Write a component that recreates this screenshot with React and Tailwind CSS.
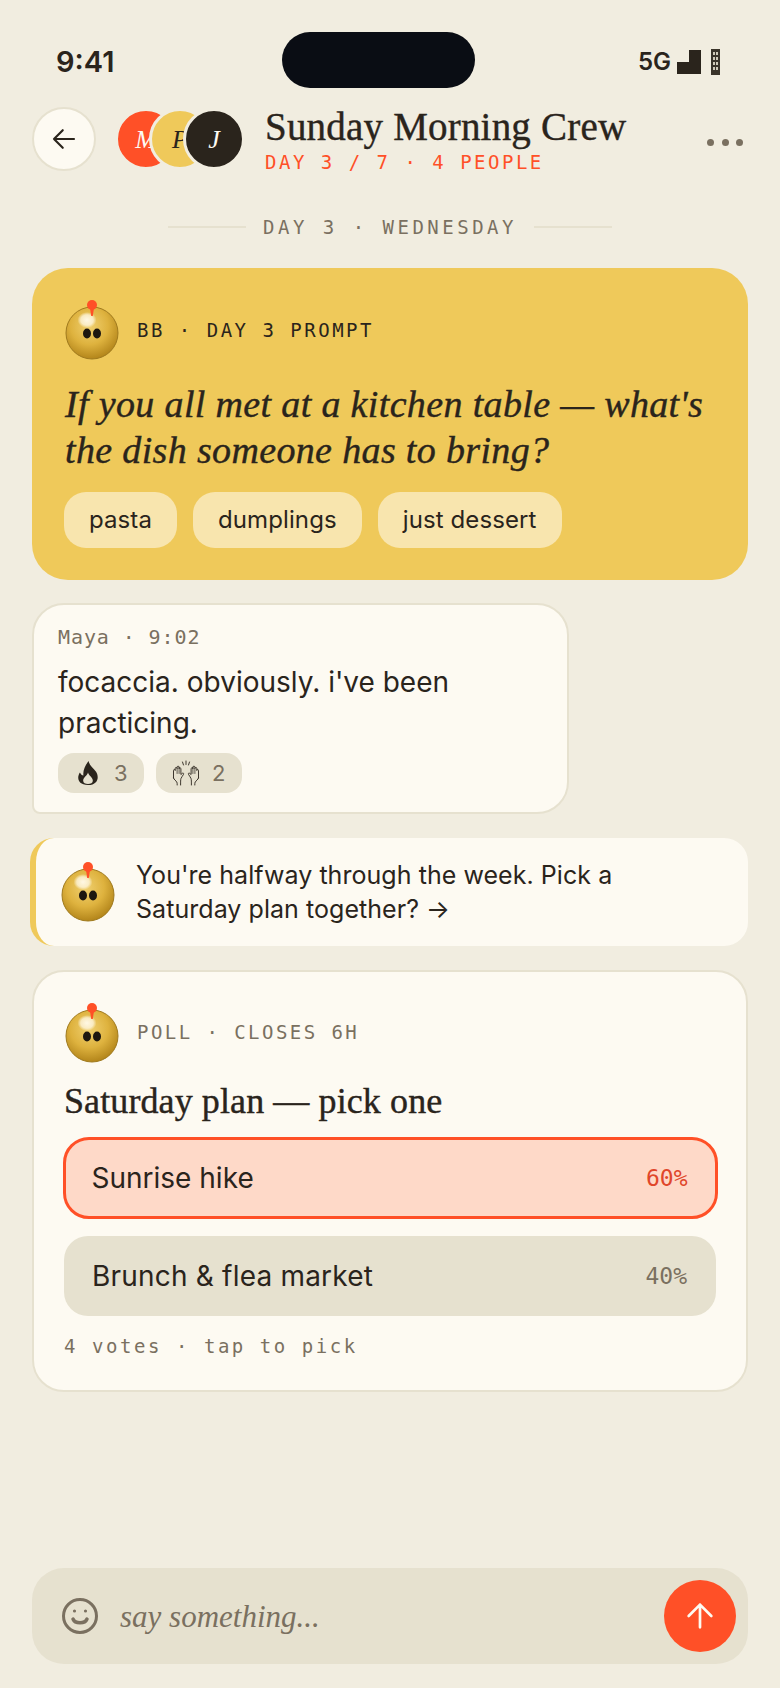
import React from "react";

const serif = "font-['Liberation_Serif',serif]";
const heavy = "[-webkit-text-stroke:0.4px_currentColor]";
const mono = "font-['DejaVu_Sans_Mono',monospace]";

function Bob({ id }) {
  return (
    <svg width="54" height="60" viewBox="0 0 54 60" className="shrink-0">
      <defs>
        <radialGradient id={`g${id}`} cx="0.45" cy="0.36" r="0.66">
          <stop offset="0" stopColor="#f0d070" />
          <stop offset="0.55" stopColor="#deb23e" />
          <stop offset="1" stopColor="#b08218" />
        </radialGradient>
        <radialGradient id={`h${id}`} cx="0.5" cy="0.5" r="0.5">
          <stop offset="0" stopColor="#fff8e4" stopOpacity="1" />
          <stop offset="0.65" stopColor="#fff8e4" stopOpacity="0.75" />
          <stop offset="1" stopColor="#fff8e4" stopOpacity="0" />
        </radialGradient>
      </defs>
      <circle cx="27" cy="33" r="26" fill={`url(#g${id})`} stroke="#a07a1e" strokeWidth="1" />
      <ellipse cx="22" cy="20" rx="9.500" ry="8" fill={`url(#h${id})`} />
      <path d="M25 8h4l-1.200 8h-1.600z" fill="#ff5027" />
      <circle cx="27" cy="5" r="5" fill="#ff5027" />
      <ellipse cx="22" cy="33.500" rx="4" ry="5" fill="#1d1710" />
      <ellipse cx="32" cy="33.500" rx="4" ry="5" fill="#1d1710" />
    </svg>
  );
}

function Avatar({ letter, bg, fg, cls }) {
  return (
    <div className={`w-[62px] h-[62px] rounded-full flex items-center justify-center border-[3px] ${serif} italic text-[26px] ${bg} ${fg} ${cls}`}>
      {letter}
    </div>
  );
}

function Chip({ children }) {
  return (
    <div className="h-[56px] px-[25px] rounded-[22px] bg-[#f8e5ae] flex items-center text-[24px] tracking-[0.1px] text-[#2a241c]">
      {children}
    </div>
  );
}

function Flame() {
  return (
    <svg width="28" height="28" viewBox="0 0 28 28">
      <g transform="translate(14 14) scale(1.150) translate(-14 -13.500)">
        <path d="M14.500 3c.6 4 4 6 6.500 9.500 2.600 3.800 2.400 11.500-7 11.500-9.500 0-9.700-7.500-7-11 .8 1.700 1.800 2.500 3 2.700-.6-4.500 1.700-9 4.500-12.700z" fill="#2a241c" />
        <path d="M14 13c.8 3 4.200 4 4.200 7.200 0 2-1.900 2.800-4.200 2.800s-4.200-.8-4.200-2.800C9.800 17 13.200 16 14 13z" fill="#e6e1cf" />
      </g>
    </svg>
  );
}

function Hands() {
  const hand = (
    <g fill="none" stroke="#2a241c" strokeWidth="0.9" strokeLinecap="round" strokeLinejoin="round">
      <path d="M1.500 19v-7.500c0-1.300 1.600-1.300 1.700 0V9.500c0-1.400 1.800-1.400 1.900 0V8.200c0-1.400 1.900-1.400 2 0v1.500c0-1.200 1.800-1.200 1.800.1v5.700c.6-.2 1.200-1.200 1.800-1.400.8-.2 1.200.6.800 1.300-.8 1.500-2 2.700-2.600 4.300-.3 1-.3 3-.3 6.300" />
      <path d="M1.500 19c.3 1.500 2.700 3 3.300 4 .4.800.4 2 .4 3" />
      <path d="M5.100 9.500v5M7.100 8.200v6.300" strokeWidth="0.7" />
    </g>
  );
  return (
    <svg width="28" height="28" viewBox="0 0 28 28">
      {hand}
      <g transform="translate(28 0) scale(-1 1)">{hand}</g>
      <path d="M14 2v3.500M10.500 3l1 3M17.500 3l-1 3" fill="none" stroke="#2a241c" strokeWidth="0.9" strokeLinecap="round" />
    </svg>
  );
}

function Reaction({ icon, n }) {
  return (
    <div className="w-[86px] h-[40px] rounded-[16px] bg-[#e6e1cf] flex items-center pl-[16px] gap-[12px] text-[22px]">
      {icon}
      <span className="text-[#7a7060]">{n}</span>
    </div>
  );
}

export default function App() {
  return (
    <div className="w-[780px] h-[1688px] bg-[#f1ede0] text-[#2a241c] font-['Inter',sans-serif] flex flex-col overflow-hidden">
      {/* status */}
      <div className="h-[107px] shrink-0 flex items-start pl-[56px] pr-[60px]">
        <div className="w-[226px] mt-[44px] text-[29px] font-semibold leading-[36px]">9:41</div>
        <div className="mt-[32px] w-[193px] h-[56px] rounded-full bg-[#0a0d14]" />
        <div className="ml-auto mt-[47px] flex items-center gap-[6px] text-[24px] font-semibold leading-[30px]">
          <span>5G</span>
          <svg width="24" height="24" viewBox="0 0 24 24"><path d="M0 24V12h12V0h12v24z" fill="#2a241c" /></svg>
          <svg width="9" height="26" viewBox="0 0 9 26" className="ml-[4px]">
            <rect width="9" height="26" fill="#3a342a" />
            <path d="M2 3h2v3H2zM5 3h2v3H5zM2 8h2v3H2zM5 8h2v3H5zM2 13h2v3H2zM5 13h2v3H5zM2 18h2v3H2zM5 18h2v3H5z" fill="#cfc9b8" />
          </svg>
        </div>
      </div>

      {/* header */}
      <div className="h-[64px] shrink-0 flex items-center pl-[32px] pr-[37px]">
        <div className="w-[64px] h-[64px] rounded-full bg-[#fdfaf2] border-2 border-[#e6e1cf] flex items-center justify-center">
          <svg width="30" height="30" viewBox="0 0 24 24" fill="none" stroke="#2a241c" strokeWidth="1.700" strokeLinecap="round" strokeLinejoin="round"><path d="M20 12H4M11 5l-7 7 7 7" /></svg>
        </div>
        <div className="flex ml-[19px]">
          <Avatar letter="M" bg="bg-[#ff5027]" fg="text-[#fdfaf2]" cls="border-[#f1ede0]" />
          <Avatar letter="P" bg="bg-[#efc95a]" fg="text-[#2a241c]" cls="border-[#f1ede0] -ml-[28px]" />
          <Avatar letter="J" bg="bg-[#2a241c]" fg="text-[#fdfaf2]" cls="border-[#f1ede0] -ml-[28px]" />
        </div>
        <div className="ml-[20px] flex flex-col">
          <div className={`${serif} ${heavy} text-[39px] leading-[42px] tracking-[0.2px]`}>Sunday Morning Crew</div>
          <div className={`${mono} text-[19px] leading-[22px] mt-[3px] tracking-[2.5px] text-[#ff5027]`}>DAY 3 / 7 · 4 PEOPLE</div>
        </div>
        <div className="ml-auto mt-[6px] flex gap-[7.5px]">
          <div className="w-[7px] h-[7px] rounded-full bg-[#7a7060]" />
          <div className="w-[7px] h-[7px] rounded-full bg-[#7a7060]" />
          <div className="w-[7px] h-[7px] rounded-full bg-[#7a7060]" />
        </div>
      </div>

      {/* day */}
      <div className="mt-[44px] h-[24px] shrink-0 flex items-center justify-center gap-[17px]">
        <div className="w-[78px] h-[2px] bg-[#e6e1cf]" />
        <div className={`${mono} text-[19px] tracking-[3.5px] text-[#7a7060]`}>DAY 3 · WEDNESDAY</div>
        <div className="w-[78px] h-[2px] bg-[#e6e1cf]" />
      </div>

      <div className="mt-[29px] px-[32px] flex flex-col">
        {/* prompt */}
        <div className="h-[312px] rounded-[36px] bg-[#efc95a] pl-[33px] pr-[32px] pt-[32px]">
          <div className="flex items-start gap-[18px] h-[60px]">
            <Bob id="a" />
            <div className={`${mono} text-[19px] leading-[24px] mt-[18px] tracking-[2.5px]`}>BB · DAY 3 PROMPT</div>
          </div>
          <div className={`${serif} ${heavy} italic text-[38px] leading-[46px] mt-[21px] tracking-[0.35px]`}>
            If you all met at a kitchen table — what's<br />the dish someone has to bring?
          </div>
          <div className="flex gap-[16px] mt-[19px] -ml-[1px]">
            <Chip>pasta</Chip>
            <Chip>dumplings</Chip>
            <Chip>just dessert</Chip>
          </div>
        </div>

        {/* message */}
        <div className="mt-[23px] w-[537px] h-[211px] rounded-tl-[32px] rounded-tr-[32px] rounded-br-[32px] rounded-bl-[8px] bg-[#fdfaf2] border-2 border-[#e6e1cf] pl-[24px] pt-[18px]">
          <div className={`${mono} text-[20px] leading-[28px] tracking-[0.9px] text-[#7a7060]`}>Maya · 9:02</div>
          <div className="text-[28px] leading-[41px] mt-[11px]">focaccia. obviously. i've been<br />practicing.</div>
          <div className="flex gap-[12px] mt-[9px]">
            <Reaction icon={<Flame />} n="3" />
            <Reaction icon={<Hands />} n="2" />
          </div>
        </div>

        {/* nudge */}
        <div className="mt-[24px] -ml-[2px] h-[108px] rounded-[24px] bg-[#fdfaf2] border-l-[6px] border-[#efc95a] pl-[25px] flex items-center gap-[21px]">
          <Bob id="b" />
          <div className="text-[25px] leading-[34px] tracking-[0.05px]">You're halfway through the week. Pick a<br />Saturday plan together? →</div>
        </div>

        {/* poll */}
        <div className="mt-[24px] h-[422px] rounded-[32px] bg-[#fdfaf2] border-2 border-[#e6e1cf] pl-[31px] pr-[30px] pt-[31px]">
          <div className="flex items-start gap-[18px] h-[60px]">
            <Bob id="c" />
            <div className={`${mono} text-[19px] leading-[24px] mt-[17px] tracking-[2.45px] text-[#7a7060]`}>POLL · CLOSES 6H</div>
          </div>
          <div className={`${serif} ${heavy} text-[36px] leading-[44px] mt-[16px] -ml-[1px] tracking-[0.1px]`}>Saturday plan — pick one</div>
          <div className="mt-[14px] h-[82px] -ml-[2.500px] -mr-[1.500px] rounded-[26px] bg-[#fed9c8] border-[3px] border-[#ff5027] flex items-center justify-between pl-[26px] pr-[27px] text-[28px]">
            <span>Sunrise hike</span>
            <span className={`${mono} font-light text-[23px] text-[#e0462a]`}>60%</span>
          </div>
          <div className="mt-[17px] h-[80px] -ml-[1px] rounded-[24px] bg-[#e6e1cf] flex items-center justify-between pl-[28px] pr-[29px] text-[28px]">
            <span className="tracking-[0.2px]">Brunch &amp; flea market</span>
            <span className={`${mono} text-[23px] text-[#7a7060]`}>40%</span>
          </div>
          <div className={`${mono} text-[19px] leading-[24px] -ml-[1px] tracking-[2.55px] text-[#7a7060] mt-[18px]`}>4 votes · tap to pick</div>
        </div>
      </div>

      {/* composer */}
      <div className="mt-auto mb-[24px] mx-[32px] h-[96px] rounded-[32px] bg-[#e6e1cf] flex items-center pl-[29px] pr-[12px] shrink-0">
        <svg width="38" height="38" viewBox="0 0 38 38" fill="none" stroke="#7a7060" strokeWidth="3" strokeLinecap="round"><circle cx="19" cy="19" r="16.500" /><path d="M12 22c2 5 12 5 14 0" strokeWidth="3.500" /><circle cx="13.500" cy="14" r="0.800" fill="#7a7060" strokeWidth="1.500" /><circle cx="24.500" cy="14" r="0.800" fill="#7a7060" strokeWidth="1.500" /></svg>
        <div className={`${serif} italic text-[31px] text-[#7a7060] ml-[21px] mt-[2px]`}>say something...</div>
        <div className="ml-auto w-[72px] h-[72px] rounded-full bg-[#ff5027] flex items-center justify-center">
          <svg width="34" height="34" viewBox="0 0 24 24" fill="none" stroke="#fdfaf2" strokeWidth="1.900" strokeLinecap="round" strokeLinejoin="round"><path d="M12 20V4M4 12l8-8 8 8" /></svg>
        </div>
      </div>
    </div>
  );
}
